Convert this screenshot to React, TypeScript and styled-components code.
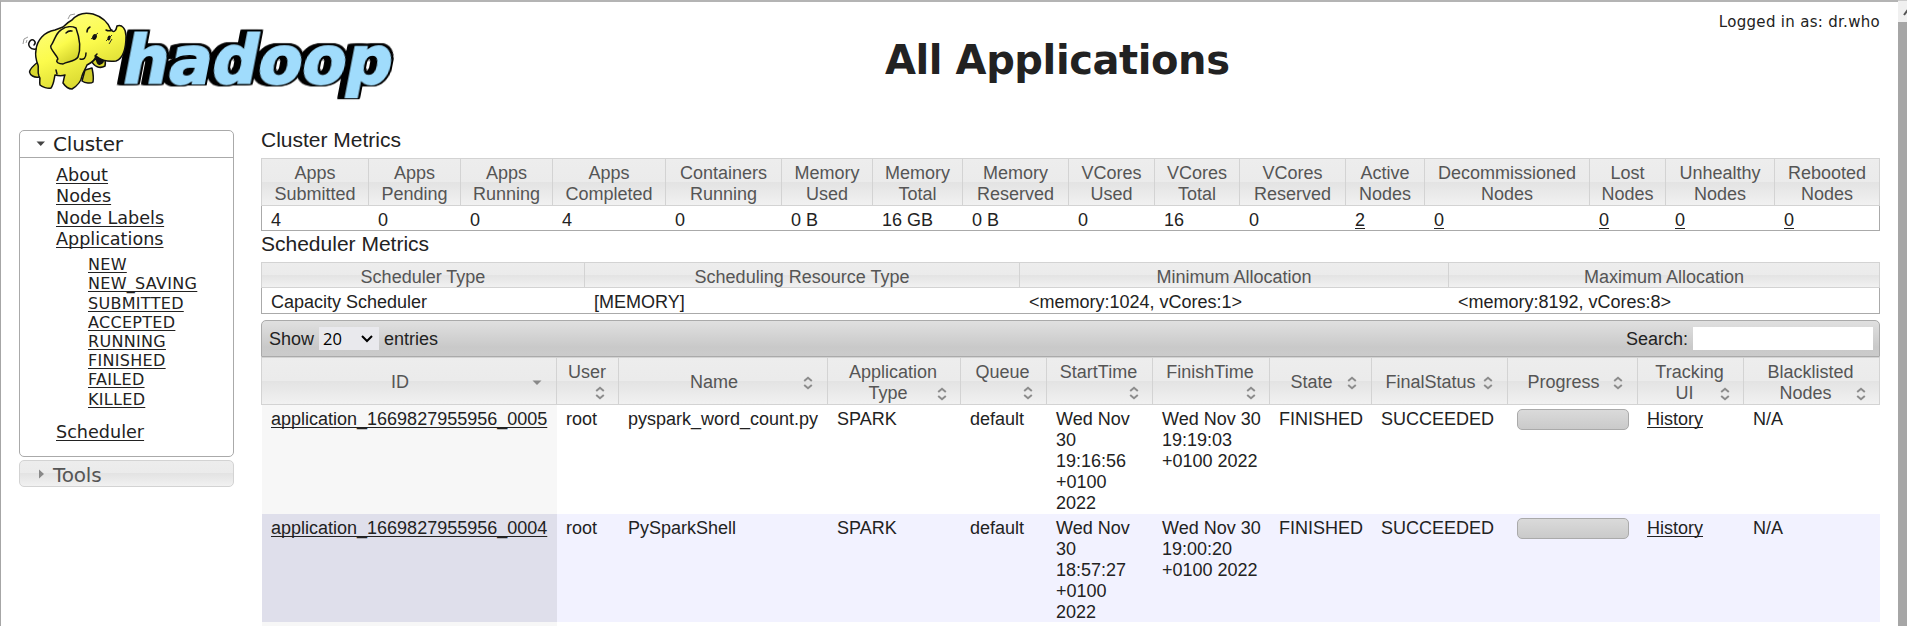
import React from 'react';
import styled, { createGlobalStyle, css } from 'styled-components';

const sans = `"Liberation Sans", Arial, sans-serif`;
const dejavu = `"DejaVu Sans", Verdana, sans-serif`;

const GlobalStyle = createGlobalStyle`
  * { box-sizing: border-box; }
  body { margin: 0; background: #fff; color: #222; font: 18px/21px ${sans}; overflow: hidden; }
`;

const stateHeader = css`
  background: linear-gradient(#ededed 0, #ebebeb 50%, #e3e3e3 50%, #f1f1f1 100%);
`;

const Window = styled.div`
  display: flex;
  height: 626px;
  overflow: hidden;
`;

const Page = styled.div`
  flex: 1;
  min-width: 0;
  border-top: 2px solid #b4b4b4;
  border-left: 1px solid #a6a6a6;
  padding-right: 18px;
`;

const ScrollTrack = styled.div`
  width: 9px;
  background: #a6a6a6;
  overflow: hidden;
  border-top: 1px solid #ccc;
`;

const ScrollButton = styled.div`
  height: 21px;
  background: #f0f0f0;
  svg { display: block; }
`;

const Header = styled.header`
  display: grid;
  grid-template-columns: 884px 1fr 400px;
  height: 125px;
`;

const LogoBox = styled.div`
  padding: 5px 0 0 17px;
  svg { display: block; overflow: visible; }
`;

const LogoText = styled.text`
  font: bold 66px "DejaVu Sans", sans-serif;
  fill: #a0dcfc;
  stroke: #a0dcfc;
  stroke-width: 2px;
  filter: drop-shadow(2px 0 0 #000) drop-shadow(-2px 0 0 #000) drop-shadow(0 1.5px 0 #000)
    drop-shadow(0 -1.5px 0 #000) drop-shadow(-5px 0 0 #000);
`;

const Title = styled.h1`
  margin: 0;
  padding-top: 35px;
  font: bold 40px/47px ${dejavu};
  letter-spacing: -0.42px;
  white-space: nowrap;
`;

const Login = styled.div`
  padding-top: 10px;
  text-align: right;
  font: 15px/20px ${dejavu};
  letter-spacing: 0.3px;
`;

const Columns = styled.div`
  display: flex;
`;

const Sidebar = styled.nav`
  width: 215px;
  margin: 3px 27px 0 18px;
  font-family: ${dejavu};
`;

const Panel = styled.section`
  height: 327px;
  border: 1px solid #aaa;
  border-radius: 5px;
`;

const SectionHead = styled.h3<{ $closed?: boolean }>`
  display: flex;
  align-items: center;
  height: 27px;
  margin: 0;
  padding-left: 16px;
  font-size: 20px;
  font-weight: normal;
  line-height: 27px;
  letter-spacing: -0.15px;
  border-bottom: 1px solid #aaa;
  svg { margin: 0 8px 1px 0; flex: none; }
  ${(p) => p.$closed && css`
    ${stateHeader}
    margin-top: 3px;
    padding-top: 2px;
    color: #555;
    border: 1px solid #d3d3d3;
    border-radius: 5px;
  `}
`;

const SectionLabel = styled.span`
  padding-top: 1px;
`;

const NavList = styled.ul<{ $nested?: boolean }>`
  list-style: none;
  margin: 0;
  padding: 7px 0 0 36px;
  font-size: 17.6px;
  line-height: 21.3px;
  ${(p) => p.$nested && css`
    padding: 5px 0 13px 32px;
    font-size: 16px;
    line-height: 19.2px;
    letter-spacing: 0.3px;
  `}
`;

const Link = styled.a`
  color: #222;
  text-decoration: underline;
  text-decoration-thickness: 1px;
  text-underline-offset: 2px;
  text-decoration-skip-ink: none;
`;

const Main = styled.main`
  width: 1619px;
`;

const Caption = styled.h2`
  margin: 0;
  height: 31px;
  padding-top: 1px;
  font-size: 21px;
  font-weight: normal;
  line-height: 24px;
`;

const HeadRow = styled.div<{ $cols: string; $height: number }>`
  display: grid;
  grid-template-columns: ${(p) => p.$cols};
  height: ${(p) => p.$height}px;
  border: 1px solid #d3d3d3;
  border-right: 0;
  ${stateHeader}
`;

const HeadCell = styled.div`
  display: flex;
  align-items: center;
  justify-content: center;
  padding: 4px 9px 0;
  border-right: 1px solid #d3d3d3;
  color: #555;
  text-align: center;
  white-space: pre-line;
`;

const ValueRow = styled.div<{ $cols: string; $height: number }>`
  display: grid;
  grid-template-columns: ${(p) => p.$cols};
  height: ${(p) => p.$height}px;
  border: 1px solid #aaa;
  border-top: 0;
`;

const Value = styled.div`
  padding: 4px 0 0 9px;
  height: 24px;
  line-height: 20px;
  white-space: nowrap;
`;

const Toolbar = styled.div`
  display: flex;
  align-items: center;
  height: 37px;
  margin-top: 6px;
  padding: 0 6px 0 7px;
  border: 1px solid #aaa;
  border-radius: 5px 5px 0 0;
  background: linear-gradient(#e0e0e0, #c9c9c9 75%, #cbcbcb);
`;

const ToolbarText = styled.span`
  padding-top: 2px;
`;

const Select = styled.div`
  display: flex;
  align-items: center;
  justify-content: space-between;
  width: 60px;
  height: 23px;
  margin: 0 5px;
  padding: 1px 6px 0 4px;
  background: #e9e9ed;
  color: #000;
  font: 16.5px/22px "Open Sans", sans-serif;
`;

const SearchLabel = styled.label`
  margin-left: auto;
  padding-top: 2px;
`;

const SearchInput = styled.input`
  width: 180px;
  height: 23px;
  margin-left: 5px;
  border: 0;
  padding: 0;
  background: #fff;
`;

const SortHead = styled(HeadCell)<{ $stacked?: boolean }>`
  padding: 3px 14px 0 6px;
  justify-content: space-between;
  ${(p) => p.$stacked && css`
    flex-direction: column;
    justify-content: flex-start;
    align-items: stretch;
    padding: 4px 13px 0 11px;
    > svg { align-self: flex-end; margin-top: 3px; }
  `}
`;

const SortLabel = styled.span`
  flex: 1;
`;

const LastLine = styled.span`
  display: flex;
  align-items: center;
  height: 21px;
  svg { margin-top: 1px; }
`;

const AppRow = styled.div<{ $cols: string; $even?: boolean; $height: number }>`
  display: grid;
  grid-template-columns: ${(p) => p.$cols};
  height: ${(p) => p.$height}px;
  margin-left: 1px;
  background: ${(p) => (p.$even ? '#f2f2ff' : '#fff')};
  > :first-child { background: ${(p) => (p.$even ? '#dfdfeb' : '#f7f7f7')}; }
`;

const AppCell = styled.div`
  padding: 4px 0 0 9px;
  white-space: pre-line;
`;

const Progress = styled.div`
  width: 112px;
  height: 21px;
  border: 1px solid #aaa;
  border-radius: 5px;
  background: linear-gradient(#dadada, #cacaca);
`;

const Logo = () => (
  <svg width="385" height="98" viewBox="17 7 385 98">
    <defs>
      <linearGradient id="skin" x1="0" y1="0" x2="0.5" y2="1">
        <stop offset="0" stopColor="#ffff8a" />
        <stop offset="0.55" stopColor="#fbfb4c" />
        <stop offset="1" stopColor="#d6d52e" />
      </linearGradient>
    </defs>
    <g transform="translate(119 83.5) skewX(-11)">
      <LogoText x="0" y="0" textLength="269" lengthAdjust="spacingAndGlyphs">hadoop</LogoText>
    </g>
    <g stroke="#111" strokeWidth="1.5" strokeLinejoin="round" strokeLinecap="round">
      <path fill="#d8d72e" d="M37 62C33 65 29 69 28.500 72C29 75 33 78 38 77L42 70Z" />
      <path fill="#cfcd2a" d="M84 70L91 68C92 73 93 77 92 82C90 84 84 83 81 81Z" />
      <path fill="#d8d72e" d="M90 60C93 67 99 69 104 66C105 63 104 60 103 58Z" />
      <path fill="#111" d="M95 58C96 62 97 65 99 64C102 63 103 61 102 59Z" />
      <path fill="url(#skin)" d="M35 50C36 40 43 32 54 30L62 27C66 23 69 21 71 20C76 14 84 12 92 14C102 17 107 22 110 30C113 33 115 31 116 26C121 24 125 29 125 36C125 48 123 58 115 61C108 62 100 60 95 56C94 61 90 63 86 65C84 70 82 72 81 76C80 82 76 86 71 89C67 89 64 86 62 83C63 79 63 77 64 75C61 76 58 76 54 75C53 79 53 84 50 88C47 89 41 87 39 85C38 82 40 78 38 76C36 72 38 68 37 65C35 60 34 55 35 50Z" />
      <path fill="url(#skin)" d="M51 44C54 39 55 33 60 30C65 26 71 26 75 28C79 39 80 49 77 57C74 62 66 61 62 64C57 64 55 62 56 60C59 59 53 54 50 48C49 46 50 45 51 44Z" />
      <path fill="none" d="M35 49C29 50 26 45 29 41C32 38 36 42 33 45M56 74L55 70M79 59C83 60 85 58 85 53M65 33C68 30 70 31 71 31M86 32C86 29 87 28 89 27M105 30C107 31 109 31 111 30M94 56L96 54" />
    </g>
    <ellipse cx="93.500" cy="37" rx="2.200" ry="3" fill="#111" transform="rotate(25 93.500 37)" />
    <ellipse cx="108" cy="38" rx="1.500" ry="2.500" fill="#111" transform="rotate(20 108 38)" />
    <path d="M90 39L97 33M105 41L111 35M108 44L111 39" stroke="#222" strokeWidth="0.9" />
    <path d="M67 19L69 15L74 14M22 44L23 39L27 37M25 43L26 40" stroke="#999" fill="none" />
  </svg>
);

const Triangle = ({ dir, color }: { dir: 'down' | 'right'; color: string }) => (
  <svg width="9" height="10" viewBox="0 0 9 10">
    <path d={dir === 'down' ? 'M0.500 2.500H9L4.750 7Z' : 'M3 0.500V9.500L8 5Z'} fill={color} />
  </svg>
);

const SortBoth = () => (
  <svg width="10" height="14" viewBox="0 0 10 14" fill="none" stroke="#8c8c8c" strokeWidth="2">
    <path d="M1.200 5L5 1.800L8.800 5M1.200 9L5 12.200L8.800 9" />
  </svg>
);

const SortDown = () => (
  <svg width="10" height="14" viewBox="0 0 10 14"><path d="M0.500 4.500H9.500L5 9Z" fill="#888" /></svg>
);

const px = (widths: number[]) => widths.map((w) => `${w}px`).join(' ');
const clusterCols = px([107, 92, 92, 113, 116, 91, 90, 106, 86, 85, 106, 79, 165, 76, 109, 105]);
const schedulerCols = px([323, 435, 429, 431]);
const appCols = px([295, 62, 209, 133, 86, 106, 117, 102, 136, 130, 106, 136]);

const clusterMetrics: [string, string, boolean?][] = [
  ['Apps\nSubmitted', '4'], ['Apps\nPending', '0'], ['Apps\nRunning', '0'], ['Apps\nCompleted', '4'],
  ['Containers\nRunning', '0'], ['Memory\nUsed', '0 B'], ['Memory\nTotal', '16 GB'], ['Memory\nReserved', '0 B'],
  ['VCores\nUsed', '0'], ['VCores\nTotal', '16'], ['VCores\nReserved', '0'], ['Active\nNodes', '2', true],
  ['Decommissioned\nNodes', '0', true], ['Lost\nNodes', '0', true], ['Unhealthy\nNodes', '0', true], ['Rebooted\nNodes', '0', true],
];

const schedulerMetrics = [
  ['Scheduler Type', 'Capacity Scheduler'],
  ['Scheduling Resource Type', '[MEMORY]'],
  ['Minimum Allocation', '<memory:1024, vCores:1>'],
  ['Maximum Allocation', '<memory:8192, vCores:8>'],
];

const appHeads: { first: string; second?: string; stacked?: boolean }[] = [
  { first: 'ID' }, { first: 'User', stacked: true }, { first: 'Name' },
  { first: 'Application', second: 'Type', stacked: true }, { first: 'Queue', stacked: true },
  { first: 'StartTime', stacked: true }, { first: 'FinishTime', stacked: true },
  { first: 'State' }, { first: 'FinalStatus' }, { first: 'Progress' },
  { first: 'Tracking', second: 'UI', stacked: true }, { first: 'Blacklisted', second: 'Nodes', stacked: true },
];

const apps = [
  { id: 'application_1669827955956_0005', name: 'pyspark_word_count.py', start: 'Wed Nov\n30\n19:16:56\n+0100\n2022', finish: 'Wed Nov 30\n19:19:03\n+0100 2022', height: 109 },
  { id: 'application_1669827955956_0004', name: 'PySparkShell', start: 'Wed Nov\n30\n18:57:27\n+0100\n2022', finish: 'Wed Nov 30\n19:00:20\n+0100 2022', height: 108 },
];

const appStates = ['NEW', 'NEW_SAVING', 'SUBMITTED', 'ACCEPTED', 'RUNNING', 'FINISHED', 'FAILED', 'KILLED'];

export default function App() {
  return (
    <>
      <GlobalStyle />
      <Window>
        <Page>
          <Header>
            <LogoBox><Logo /></LogoBox>
            <Title>All Applications</Title>
            <Login>Logged in as: dr.who</Login>
          </Header>
          <Columns>
            <Sidebar>
              <Panel>
                <SectionHead><Triangle dir="down" color="#444" /><SectionLabel>Cluster</SectionLabel></SectionHead>
                <NavList>
                  {['About', 'Nodes', 'Node Labels', 'Applications'].map((t) => <li key={t}><Link>{t}</Link></li>)}
                  <li>
                    <NavList $nested>
                      {appStates.map((t) => <li key={t}><Link>{t}</Link></li>)}
                    </NavList>
                  </li>
                  <li><Link>Scheduler</Link></li>
                </NavList>
              </Panel>
              <SectionHead $closed><Triangle dir="right" color="#888" /><SectionLabel>Tools</SectionLabel></SectionHead>
            </Sidebar>
            <Main>
              <Caption>Cluster Metrics</Caption>
              <HeadRow $cols={clusterCols} $height={48}>
                {clusterMetrics.map(([label]) => <HeadCell key={label}>{label}</HeadCell>)}
              </HeadRow>
              <ValueRow $cols={clusterCols} $height={25}>
                {clusterMetrics.map(([label, value, linked]) => (
                  <Value key={label}>{linked ? <Link>{value}</Link> : value}</Value>
                ))}
              </ValueRow>
              <Caption>Scheduler Metrics</Caption>
              <HeadRow $cols={schedulerCols} $height={26}>
                {schedulerMetrics.map(([label]) => <HeadCell key={label}>{label}</HeadCell>)}
              </HeadRow>
              <ValueRow $cols={schedulerCols} $height={26}>
                {schedulerMetrics.map(([label, value]) => <Value key={label}>{value}</Value>)}
              </ValueRow>
              <Toolbar>
                <ToolbarText>Show</ToolbarText>
                <Select>
                  20
                  <svg width="12" height="8" viewBox="0 0 12 8" fill="none" stroke="#000" strokeWidth="2"><path d="M1 1L6 6L11 1" /></svg>
                </Select>
                <ToolbarText>entries</ToolbarText>
                <SearchLabel>Search:</SearchLabel>
                <SearchInput />
              </Toolbar>
              <HeadRow $cols={appCols} $height={48}>
                {appHeads.map(({ first, second, stacked }) => (
                  <SortHead key={first} $stacked={stacked}>
                    {second ? (
                      <>
                        <span>{first}</span>
                        <LastLine><SortLabel>{second}</SortLabel><SortBoth /></LastLine>
                      </>
                    ) : (
                      <>
                        {stacked ? <span>{first}</span> : <SortLabel>{first}</SortLabel>}
                        {first === 'ID' ? <SortDown /> : <SortBoth />}
                      </>
                    )}
                  </SortHead>
                ))}
              </HeadRow>
              {apps.map((app, i) => (
                <AppRow key={app.id} $cols={appCols} $even={i % 2 === 1} $height={app.height}>
                  <AppCell><Link>{app.id}</Link></AppCell>
                  <AppCell>root</AppCell>
                  <AppCell>{app.name}</AppCell>
                  <AppCell>SPARK</AppCell>
                  <AppCell>default</AppCell>
                  <AppCell>{app.start}</AppCell>
                  <AppCell>{app.finish}</AppCell>
                  <AppCell>FINISHED</AppCell>
                  <AppCell>SUCCEEDED</AppCell>
                  <AppCell><Progress /></AppCell>
                  <AppCell><Link>History</Link></AppCell>
                  <AppCell>N/A</AppCell>
                </AppRow>
              ))}
              <AppRow $cols={appCols} $height={4}><AppCell /></AppRow>
            </Main>
          </Columns>
        </Page>
        <ScrollTrack>
          <ScrollButton>
            <svg width="12" height="21" viewBox="0 0 12 21"><path d="M6 14L10.500 8L15 14" fill="none" stroke="#555" strokeWidth="2" /></svg>
          </ScrollButton>
        </ScrollTrack>
      </Window>
    </>
  );
}
